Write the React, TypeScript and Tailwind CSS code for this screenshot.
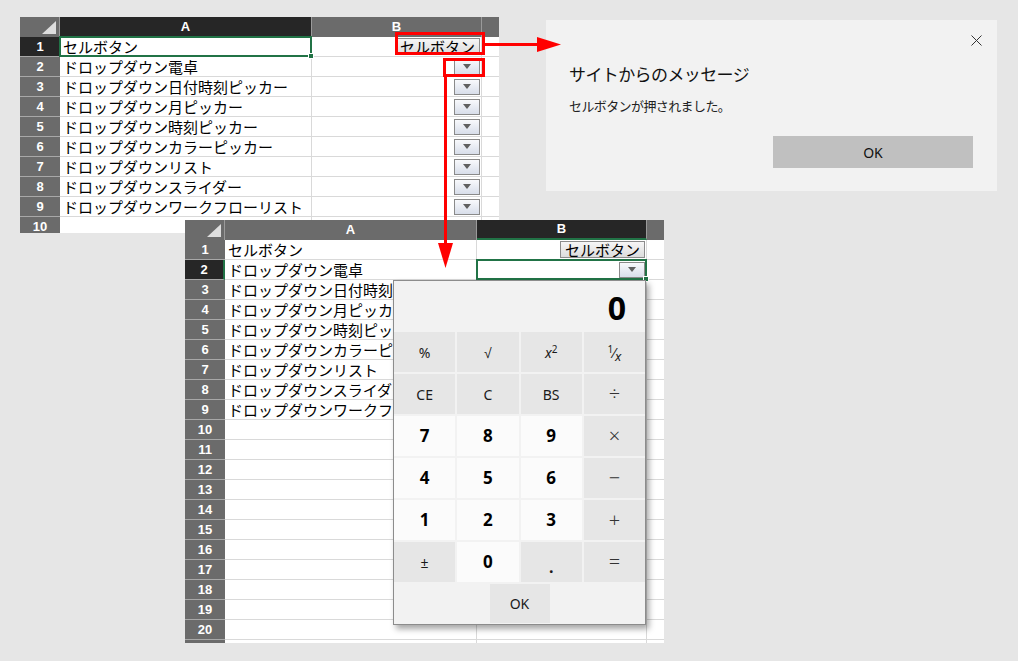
import type { ReactNode } from "react";

const LABELS = [
  "セルボタン",
  "ドロップダウン電卓",
  "ドロップダウン日付時刻ピッカー",
  "ドロップダウン月ピッカー",
  "ドロップダウン時刻ピッカー",
  "ドロップダウンカラーピッカー",
  "ドロップダウンリスト",
  "ドロップダウンスライダー",
  "ドロップダウンワークフローリスト",
];

function DropBtn() {
  return (
    <div className="w-[26px] h-[16px] border border-[#8a8a8a] bg-linear-to-b from-[#f8f9fc] to-[#d8deea] flex items-center justify-center">
      <div className="w-0 h-0 border-l-[4px] border-r-[4px] border-t-[5px] border-l-transparent border-r-transparent border-t-[#606060]" />
    </div>
  );
}

function CellButton() {
  return (
    <div className="h-[17px] px-[4px] border border-[#8c8c8c] bg-linear-to-b from-[#f6f6f6] to-[#dcdcdc] text-[15px] leading-[15px] text-black flex items-center">
      セルボタン
    </div>
  );
}

function Selection() {
  return (
    <div className="absolute -left-[1px] -top-[1px] -right-[1px] -bottom-[1px] border-2 border-[#217346] pointer-events-none z-10">
      <div className="absolute -right-[4px] -bottom-[4px] w-[6px] h-[6px] bg-[#217346] border border-white" />
    </div>
  );
}

type SheetProps = {
  className: string;
  rowCount: number;
  lastLabel: number;
  selCol: "A" | "B";
  selRow: number;
  bCell: (row: number) => ReactNode;
};

function Sheet({ className, rowCount, lastLabel, selCol, selRow, bCell }: SheetProps) {
  const hdr = (on: boolean) => (on ? "bg-[#262626]" : "bg-[#6b6b6b]");
  const rows = Array.from({ length: rowCount }, (_, i) => i + 1);
  return (
    <div
      className={`absolute overflow-hidden grid grid-cols-[40px_252px_170px_17px] auto-rows-[20px] bg-white font-['Noto_Sans_CJK_JP',sans-serif] ${className}`}
    >
      {/* header row */}
      <div className="bg-[#6b6b6b] border-r border-[#9a9a9a] relative">
        <svg className="absolute right-[3px] bottom-[3px]" width="14" height="13" viewBox="0 0 14 13">
          <polygon points="14,0 14,13 0,13" fill="#dedede" />
        </svg>
      </div>
      <div className={`${hdr(selCol === "A")} border-r border-[#9a9a9a] text-white text-[13px] font-bold flex items-center justify-center font-['Liberation_Sans',sans-serif]`}>
        A
      </div>
      <div className={`${hdr(selCol === "B")} border-r border-[#9a9a9a] text-white text-[13px] font-bold flex items-center justify-center font-['Liberation_Sans',sans-serif] ${selCol === "B" ? "border-b-2 border-b-[#217346]" : ""}`}>
        B
      </div>
      <div className="bg-[#6b6b6b]" />

      {rows.map((r) => (
        <div key={r} className="contents">
          <div
            className={`${hdr(selRow === r)} border-b border-[#a8a8a8] text-white text-[13px] font-bold flex items-center justify-center font-['Liberation_Sans',sans-serif] ${selRow === r && selCol === "B" ? "border-r-2 border-r-[#217346]" : ""}`}
          >
            {r <= lastLabel ? r : ""}
          </div>
          <div className="relative border-b border-r border-[#d9d9d9] pl-[3px] text-[15px] leading-[19px] text-black whitespace-nowrap">
            {LABELS[r - 1] ?? ""}
            {selCol === "A" && selRow === r && <Selection />}
          </div>
          <div className="relative border-b border-r border-[#d9d9d9] flex items-center justify-end pr-[1px]">
            {bCell(r)}
            {selCol === "B" && selRow === r && <Selection />}
          </div>
          <div className="border-b border-[#d9d9d9]" />
        </div>
      ))}
    </div>
  );
}

type Key = { label: ReactNode; kind: "num" | "fn" | "op" };

const KEYS: Key[] = [
  { label: "%", kind: "fn" },
  { label: "√", kind: "fn" },
  { label: <span className="italic">x<sup className="not-italic text-[10px]">2</sup></span>, kind: "fn" },
  { label: <span><sup className="text-[10px]">1</sup>⁄<sub className="italic text-[13px]">x</sub></span>, kind: "fn" },
  { label: "CE", kind: "fn" },
  { label: "C", kind: "fn" },
  { label: "BS", kind: "fn" },
  { label: "÷", kind: "op" },
  { label: "7", kind: "num" },
  { label: "8", kind: "num" },
  { label: "9", kind: "num" },
  { label: "×", kind: "op" },
  { label: "4", kind: "num" },
  { label: "5", kind: "num" },
  { label: "6", kind: "num" },
  { label: "−", kind: "op" },
  { label: "1", kind: "num" },
  { label: "2", kind: "num" },
  { label: "3", kind: "num" },
  { label: "+", kind: "op" },
  { label: "±", kind: "fn" },
  { label: "0", kind: "num" },
  { label: <span className="relative top-[5px] font-bold text-[16px]">.</span>, kind: "fn" },
  { label: "=", kind: "op" },
];

const KEY_CLASS = {
  num: "bg-[#fbfbfb] flex items-center justify-center text-[17px] font-bold text-black",
  fn: "bg-[#e6e6e6] flex items-center justify-center text-[14px] text-[#1a1a1a]",
  op: "bg-[#e6e6e6] flex items-center justify-center text-[20px] font-light text-[#333]",
};

function Calculator() {
  return (
    <div className="absolute left-[393px] top-[280px] w-[253px] h-[345px] border border-[#8c8c8c] bg-[#f2f2f2] shadow-[3px_4px_6px_rgba(0,0,0,0.35)] flex flex-col font-['Noto_Sans',sans-serif] z-20">
      <div className="h-[50px] flex items-end justify-end pr-[19px] pb-[3px] text-[32px] font-bold leading-[40px] text-black">
        0
      </div>
      <div className="mt-[1px] grid grid-cols-4 auto-rows-[40px] gap-[2px]">
        {KEYS.map((k, i) => (
          <div key={i} className={KEY_CLASS[k.kind]}>
            {k.label}
          </div>
        ))}
      </div>
      <div className="mt-[2px] flex justify-center">
        <div className="w-[60px] h-[39px] bg-[#e6e6e6] flex items-center justify-center text-[14px] text-[#1a1a1a]">
          OK
        </div>
      </div>
    </div>
  );
}

function Dialog() {
  return (
    <div className="absolute left-[546px] top-[20px] w-[451px] h-[171px] bg-[#f2f2f2] flex flex-col font-['Noto_Sans_CJK_JP',sans-serif]">
      <svg className="absolute right-[15px] top-[15px]" width="11" height="11" viewBox="0 0 11 11">
        <path d="M0.5 0.5 L10.5 10.5 M10.5 0.5 L0.5 10.5" stroke="#333" strokeWidth="1" />
      </svg>
      <div className="pl-[23px] pt-[42px] text-[17px] leading-[24px] tracking-[-0.6px] text-[#111]">
        サイトからのメッセージ
      </div>
      <div className="pl-[23px] mt-[11px] text-[13px] leading-[18px] tracking-[-0.6px] text-[#222]">
        セルボタンが押されました。
      </div>
      <div className="mt-[21px] self-end mr-[24px] w-[200px] h-[32px] bg-[#c0c0c0] flex items-center justify-center text-[14px] text-[#111] font-['Noto_Sans',sans-serif]">
        OK
      </div>
    </div>
  );
}

export default function App() {
  return (
    <div className="relative w-[1018px] h-[661px] bg-[#e6e6e6] overflow-hidden">
      <Sheet
        className="left-[20px] top-[17px] h-[216px]"
        rowCount={10}
        lastLabel={10}
        selCol="A"
        selRow={1}
        bCell={(r) => (r === 1 ? <CellButton /> : r <= 9 ? <DropBtn /> : null)}
      />
      <Dialog />
      <Sheet
        className="left-[185px] top-[220px] h-[423px]"
        rowCount={21}
        lastLabel={20}
        selCol="B"
        selRow={2}
        bCell={(r) => (r === 1 ? <CellButton /> : r === 2 ? <DropBtn /> : null)}
      />
      <Calculator />
      <svg className="absolute left-0 top-0 pointer-events-none z-30" width="1018" height="661" viewBox="0 0 1018 661">
        <rect x="396.5" y="33.5" width="87" height="20" fill="none" stroke="#ff0000" strokeWidth="3" />
        <rect x="444.5" y="59.5" width="39" height="16" fill="none" stroke="#ff0000" strokeWidth="3" />
        <line x1="485" y1="44.5" x2="540" y2="44.5" stroke="#ff0000" strokeWidth="3" />
        <polygon points="537,37 561,44.5 537,52" fill="#ff0000" />
        <line x1="445.5" y1="77" x2="445.5" y2="246" stroke="#ff0000" strokeWidth="3" />
        <polygon points="438,243 453,243 445.5,268" fill="#ff0000" />
      </svg>
    </div>
  );
}
